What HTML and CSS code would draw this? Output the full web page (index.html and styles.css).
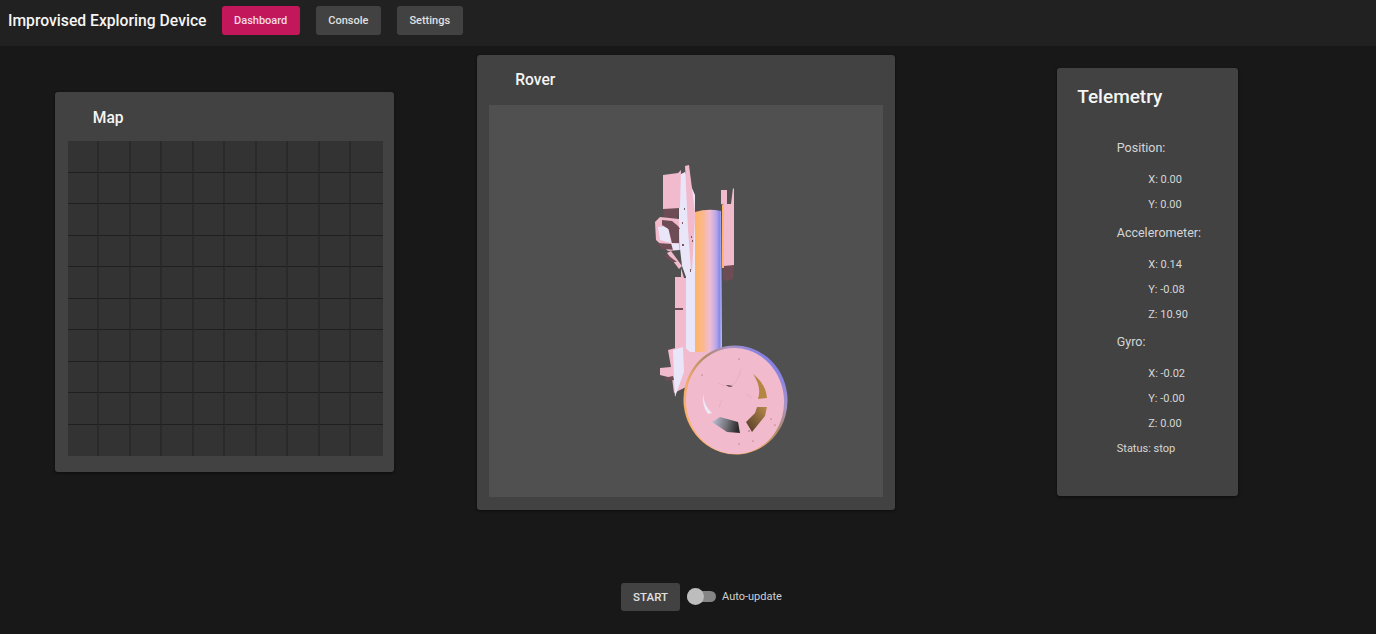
FILE: index.html
```html
<!DOCTYPE html>
<html lang="en">
<head>
<meta charset="utf-8">
<title>Improvised Exploring Device</title>
<link rel="stylesheet" href="styles.css">
</head>
<body>
<header class="topbar">
  <h1 class="brand">Improvised Exploring Device</h1>
  <nav class="nav">
    <button class="btn btn-active">Dashboard</button>
    <button class="btn">Console</button>
    <button class="btn">Settings</button>
  </nav>
</header>
<main class="board">
  <section class="card map-card">
    <h2 class="card-title">Map</h2>
    <div class="map-grid">
      <i></i><i></i><i></i><i></i><i></i><i></i><i></i><i></i><i></i><i></i>
      <i></i><i></i><i></i><i></i><i></i><i></i><i></i><i></i><i></i><i></i>
      <i></i><i></i><i></i><i></i><i></i><i></i><i></i><i></i><i></i><i></i>
      <i></i><i></i><i></i><i></i><i></i><i></i><i></i><i></i><i></i><i></i>
      <i></i><i></i><i></i><i></i><i></i><i></i><i></i><i></i><i></i><i></i>
      <i></i><i></i><i></i><i></i><i></i><i></i><i></i><i></i><i></i><i></i>
      <i></i><i></i><i></i><i></i><i></i><i></i><i></i><i></i><i></i><i></i>
      <i></i><i></i><i></i><i></i><i></i><i></i><i></i><i></i><i></i><i></i>
      <i></i><i></i><i></i><i></i><i></i><i></i><i></i><i></i><i></i><i></i>
      <i></i><i></i><i></i><i></i><i></i><i></i><i></i><i></i><i></i><i></i>
    </div>
  </section>
  <section class="card rover-card">
    <h2 class="card-title">Rover</h2>
    <div class="viewport">
      <svg class="rover" viewBox="489 105 394 392" aria-label="Rover 3D model">
        <defs>
          <linearGradient id="tube" x1="0" x2="1" y1="0" y2="0">
            <stop offset="0" stop-color="#ffb56a"/>
            <stop offset=".28" stop-color="#fbb88a"/>
            <stop offset=".55" stop-color="#f0bcd6"/>
            <stop offset=".78" stop-color="#baa8e6"/>
            <stop offset=".92" stop-color="#8686ee"/>
            <stop offset="1" stop-color="#d4d4f6"/>
          </linearGradient>
          <linearGradient id="rim" x1=".08" x2=".92" y1=".85" y2=".15">
            <stop offset="0" stop-color="#ffb56a"/>
            <stop offset=".32" stop-color="#f0aa6a"/>
            <stop offset=".58" stop-color="#b08a6a"/>
            <stop offset=".78" stop-color="#a893c8"/>
            <stop offset="1" stop-color="#7a7bee"/>
          </linearGradient>
          <linearGradient id="slotGray" x1="0" x2="1" y1="0" y2=".15">
            <stop offset="0" stop-color="#c4c4de"/>
            <stop offset=".55" stop-color="#77777f"/>
            <stop offset="1" stop-color="#2c2c2c"/>
          </linearGradient>
          <linearGradient id="slotBrown" x1="1" x2="0" y1="0" y2="1">
            <stop offset="0" stop-color="#b98a4c"/>
            <stop offset="1" stop-color="#4e3a26"/>
          </linearGradient>
        </defs>
        <!-- plate -->
        <polygon class="pale" points="679,175 685,172 695,195 695,352 686,352 686,277 682,266 679,240"/>
        <polygon class="pink" points="685,166 689,165 695,212 695,218 692,270 691,270 688,230"/>
        <!-- upper left block -->
        <polygon class="shade" points="663,208 678,208 679,213 676,219 664,218"/>
        <polygon class="pink" points="663,175 678,173 681,170 680,208 663,209"/>
        <!-- upper left mechanism -->
        <polygon class="pink" points="655,222 660,217 679,219 680,250 668,251 656,240"/>
        <polygon class="pale" points="658,227 668,226 671,243 660,240"/>
        <polygon class="shade" points="662,220 672,221 678,226 680,229 670,230 662,225"/>
        <polygon class="shade" points="668,227 679,229 679,243 672,243"/>
        <polygon class="shade" points="657,243 672,244 679,246 678,250 662,249"/>
        <polygon class="pale" points="671,243 679,244 679,250 673,250"/>
        <polygon class="pink" points="667,253 671,251 682,266 679,269"/>
        <polygon class="shade" points="663,255 669,256 677,262 672,262"/>
        <rect class="speck" x="682" y="222" width="1" height="2"/>
        <rect class="speck" x="691" y="236" width="1" height="2"/>
        <rect class="speck" x="692" y="240" width="1" height="2"/>
        <rect class="speck" x="684" y="208" width="1" height="2"/>
        <rect class="speck" x="682" y="244" width="2" height="2"/>
        <rect class="speck" x="690" y="269" width="1" height="3"/>
        <!-- lower plate pink -->
        <polygon class="pink" points="675,277 681,277 681,268 684,278 686,278 686,352 675,352"/>
        <rect class="shade" x="675" y="308" width="8" height="2"/>
        <!-- tube -->
        <path d="M695 212 Q708 208 721 211 L722 356 L695 356Z" fill="url(#tube)"/>
        <!-- right bracket -->
        <polygon class="shade" points="723,265 734,265 733,279 725,281 723,278"/>
        <polygon class="orange" points="722,205 724,205 724,268 722,268"/>
        <polygon class="pink" points="721,190 727,190 727,204 731,204 733,188 734,189 734,265 724,266 724,205 721,204"/>
        <!-- lower left mechanism -->
        <polygon class="pink" points="660,368 671,367 668,350 683,346 690,352 690,385 674,393 672,378 660,375"/>
        <polygon class="pale" points="673,350 683,347 684,372 675,397 674,380"/>
        <polygon class="shade" points="664,378 673,376 674,380 666,381"/>
        <polygon class="pink" points="687,352 722,352 722,365 687,375"/>
        <!-- wheel -->
        <ellipse cx="735.5" cy="400" rx="52" ry="54.5" fill="url(#rim)" transform="rotate(-6 735.5 400)"/>
        <ellipse class="pink" cx="735" cy="401" rx="49" ry="53" transform="rotate(-6 735 401)"/>
        <!-- wheel cut-outs -->
        <polygon fill="url(#slotBrown)" points="757,407 767,407 765,416 752,432 746,422 755,413"/>
        <polygon fill="url(#slotGray)" points="712,422 720,417 738,422 740,433 727,432"/>
        <path d="M753 374 Q766 384 767 398 L758 399 Q762 387 753 374Z" fill="#b48642"/>
        <path d="M703 394 Q704 406 712 413 L708 414 Q702 406 703 394Z" fill="#eceaf6"/>
        <path d="M718 383 Q725 387 731 386 Q738 382 741 369" class="wire"/>
        <path d="M726 385 Q729 388 733 386Z" fill="#2e2a2a"/>
        <path d="M720 407 Q718 408 722 400" class="wire"/>
        <path d="M752 398 Q749 396 746 394" class="wire"/>
        <circle class="speck" cx="739" cy="359" r=".6"/>
        <circle class="speck" cx="702" cy="375" r=".6"/>
        <circle class="speck" cx="749" cy="431" r=".7"/>
        <circle class="speck" cx="739" cy="444" r=".6"/>
        <circle class="speck" cx="753" cy="441" r=".6"/>
        <circle class="speck" cx="771" cy="419" r=".6"/>
        <circle class="speck" cx="775" cy="425" r=".6"/>
      </svg>
    </div>
  </section>
  <section class="card telemetry">
    <h2 class="telemetry-title">Telemetry</h2>
    <div class="readings">
      <p class="group-label">Position:</p>
      <p class="value">X: 0.00</p>
      <p class="value">Y: 0.00</p>
      <p class="group-label">Accelerometer:</p>
      <p class="value">X: 0.14</p>
      <p class="value">Y: -0.08</p>
      <p class="value">Z: 10.90</p>
      <p class="group-label">Gyro:</p>
      <p class="value">X: -0.02</p>
      <p class="value">Y: -0.00</p>
      <p class="value">Z: 0.00</p>
      <p class="status">Status: stop</p>
    </div>
  </section>
</main>
<footer class="controls">
  <button class="btn btn-start">START</button>
  <span class="switch"><span class="knob"></span></span>
  <span class="switch-label">Auto-update</span>
</footer>
</body>
</html>
```
FILE: styles.css
```css
* { box-sizing: border-box; }
html, body { height: 100%; }
body {
  margin: 0;
  background: #181818;
  color: #fff;
  font-family: Roboto, "Liberation Sans", sans-serif;
  overflow: hidden;
}
.topbar {
  display: flex;
  align-items: center;
  height: 46px;
  padding: 0 0 5px 8px;
  background: #212121;
}
.brand {
  margin: 0 15px 0 0;
  font-size: 15.7px;
  font-weight: 500;
  color: #f5f5f5;
  white-space: nowrap;
}
.nav { display: flex; gap: 16px; }
.btn {
  height: 29px;
  padding: 0 12.5px;
  border: 0;
  border-radius: 3px;
  background: #424242;
  color: #e0e0e0;
  font-family: inherit;
  font-size: 11px;
  font-weight: 500;
}
.btn-active { background: #c2185b; color: #f5dbe6; }
.board {
  display: grid;
  grid-template-columns: repeat(3, 461.5px);
  justify-items: center;
  align-items: center;
  height: 472px;
  margin-left: -6px;
}
.card {
  background: #424242;
  border-radius: 3px;
  box-shadow: 0 1px 3px rgba(0,0,0,.5);
}
.card-title {
  margin: 0;
  font-size: 15.6px;
  font-weight: 500;
  color: #f5f5f5;
}
.map-card { width: 339px; height: 380px; padding: 16px 12.5px 0; }
.map-card .card-title { height: 33px; padding: 1px 0 0 25px; line-height: 19px; }
.map-grid {
  display: grid;
  grid-template-columns: repeat(10, 31.5px);
  grid-auto-rows: 31.5px;
}
.map-grid i {
  display: block;
  background: #333;
  border-right: 2px solid #2a2a2a;
  border-bottom: 1px solid #1f1f1f;
}
.map-grid i:nth-child(10n) { border-right: 0; }
.map-grid i:nth-child(n+91) { border-bottom: 0; }
.rover-card { width: 418px; height: 455px; padding: 16px 12px 0; }
.rover-card .card-title { height: 34px; padding-left: 26px; line-height: 19px; }
.viewport { width: 394px; height: 392px; background: #505050; }
.rover { display: block; width: 100%; height: 100%; filter: blur(.6px); }
.pink { fill: #f2bacd; }
.pale { fill: #e9e6fa; }
.shade { fill: #6e4c55; }
.orange { fill: #ffb56a; }
.speck { fill: #7a5a60; }
.wire { fill: none; stroke: #dfa8b4; stroke-width: .6; }
.telemetry { width: 181px; height: 428px; padding: 17px 20px 0; }
.telemetry-title {
  margin: 0 0 30px;
  font-size: 19px;
  font-weight: 500;
  line-height: 23px;
  color: #f5f5f5;
}
.readings { padding-left: 39.5px; color: #d6d6d6; }
.readings p { margin: 0; }
.readings .group-label {
  height: 20px;
  margin-top: 5.5px;
  margin-bottom: 9px;
  font-size: 12.5px;
  line-height: 20px;
}
.value {
  height: 25px;
  padding-left: 31.5px;
  font-size: 11px;
  line-height: 25px;
  white-space: nowrap;
}
.status { height: 25px; font-size: 11px; line-height: 25px; }
.controls {
  display: flex;
  align-items: center;
  justify-content: center;
  height: 28px;
  margin-top: 65px;
  padding-left: 27px;
}
.btn-start {
  width: 59px;
  height: 28px;
  padding: 0;
  font-size: 11.5px;
  margin-right: 7px;
}
.switch {
  position: relative;
  display: block;
  width: 29px;
  height: 11px;
  margin-top: -2px;
  border-radius: 6px;
  background: #858585;
}
.knob {
  position: absolute;
  left: 0;
  top: -3px;
  width: 17px;
  height: 17px;
  border-radius: 50%;
  background: #bdbdbd;
}
.switch-label {
  margin: -2px 0 0 6px;
  font-size: 11px;
  color: #cfcfcf;
}
```
